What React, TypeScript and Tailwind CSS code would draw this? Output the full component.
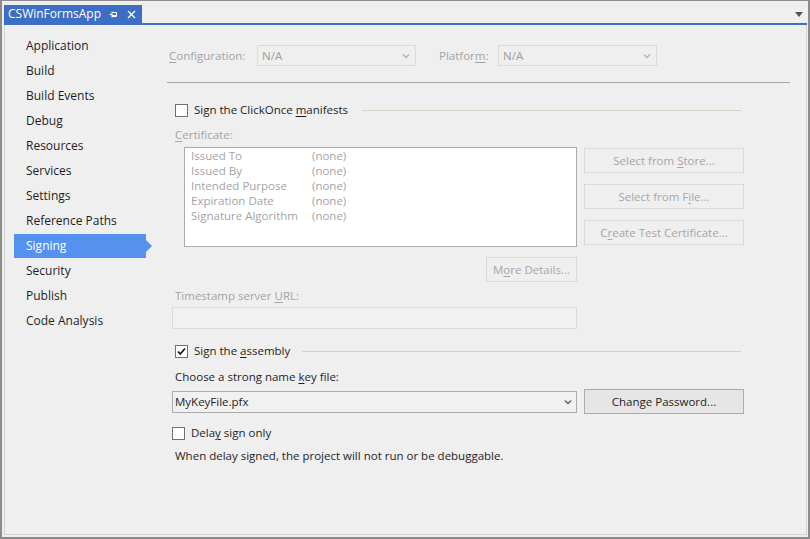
import React from 'react';

const navItems = [
  'Application',
  'Build',
  'Build Events',
  'Debug',
  'Resources',
  'Services',
  'Settings',
  'Reference Paths',
  'Signing',
  'Security',
  'Publish',
  'Code Analysis',
];

const certRows = [
  ['Issued To', '(none)'],
  ['Issued By', '(none)'],
  ['Intended Purpose', '(none)'],
  ['Expiration Date', '(none)'],
  ['Signature Algorithm', '(none)'],
];

function Chevron({ color = '#9a9a9a' }: { color?: string }) {
  return (
    <svg width="8" height="6" viewBox="0 0 8 6" className="shrink-0">
      <path d="M1 1.5 L4 4.5 L7 1.5" fill="none" stroke={color} strokeWidth="1.4" />
    </svg>
  );
}

function Checkbox({ checked }: { checked?: boolean }) {
  return (
    <div className="w-[13px] h-[13px] border border-[#707070] bg-white flex items-center justify-center shrink-0">
      {checked && (
        <svg width="11" height="11" viewBox="0 0 11 11">
          <path d="M2 5.5 L4.3 8 L9 2.5" fill="none" stroke="#1a1a1a" strokeWidth="1.8" />
        </svg>
      )}
    </div>
  );
}

function DisabledButton({ children, className = '' }: { children: React.ReactNode; className?: string }) {
  return (
    <div
      className={`h-[25px] border border-[#d9d9d9] bg-[#efefef] text-[#a6a6a6] flex items-center justify-center ${className}`}
    >
      {children}
    </div>
  );
}

export default function App() {
  return (
    <div className="w-[810px] h-[539px] bg-[#efefef] border-t border-l-2 border-r-2 border-b-2 border-[#8c8c8c] flex flex-col font-['Open_Sans','Noto_Sans',sans-serif] text-[11.5px] text-[#1e1e1e] leading-none overflow-hidden">
      {/* tab strip */}
      <div className="h-[22px] pl-[2px] pr-[5px] flex items-end justify-between shrink-0">
        <div className="h-[18px] w-[138px] bg-[#3c6fc4] text-white flex items-center pl-[4px]">
          <span className="text-[12px] w-[97px] shrink-0">CSWinFormsApp</span>
          <svg width="9" height="9" viewBox="0 0 9 9" className="ml-[4px] shrink-0">
            <path d="M0.5 4.5 H3 M3 1.5 V7.5 M3 2.5 H7.5 V6.5 H3 M3 5.5 H7.5" fill="none" stroke="white" strokeWidth="1" />
          </svg>
          <svg width="9" height="9" viewBox="0 0 9 9" className="ml-[9px] shrink-0">
            <path d="M1 1 L8 8 M8 1 L1 8" fill="none" stroke="white" strokeWidth="1.4" />
          </svg>
        </div>
        <svg width="8" height="5" viewBox="0 0 8 5" className="mb-[6px]">
          <path d="M0 0 H8 L4 5 Z" fill="#555" />
        </svg>
      </div>
      <div className="h-[2px] bg-[#3c6fc4] ml-[2px] mr-[1px] shrink-0" />

      {/* body */}
      <div className="flex-1 ml-[2px] mr-[1px] mb-[2px] border-l border-r border-b border-[#d4d4d4] flex">
        {/* sidebar */}
        <div className="w-[147px] pt-[8px] shrink-0 text-[12px]">
          {navItems.map((item) => {
            const active = item === 'Signing';
            return (
              <div key={item} className="flex items-center ml-[9px] h-[25px]">
                <div
                  className={`w-[132px] h-[24px] flex items-center pl-[12px] ${
                    active ? 'bg-[#5592f0] text-white' : ''
                  }`}
                >
                  {item}
                </div>
                {active && (
                  <svg width="6" height="12" viewBox="0 0 6 12">
                    <path d="M0 0 L6 6 L0 12 Z" fill="#5592f0" />
                  </svg>
                )}
              </div>
            );
          })}
        </div>

        {/* main */}
        <div className="flex-1 pl-[15px] pr-[15px] pt-[20px]">
          <div className="flex items-center h-[21px] text-[#a4a4a4]">
            <span className="w-[90px] shrink-0 pl-[2px]">
              <u className="underline-offset-2">C</u>onfiguration:
            </span>
            <div className="w-[159px] shrink-0 h-[21px] border border-[#d9d9d9] flex items-center justify-between pl-[4px] pr-[5px] text-[#9c9c9c]">
              <span>N/A</span>
              <Chevron color="#b4b4b4" />
            </div>
            <span className="w-[82px] shrink-0 pl-[23px]">
              Platfor<u className="underline-offset-2">m</u>:
            </span>
            <div className="w-[159px] shrink-0 h-[21px] border border-[#d9d9d9] flex items-center justify-between pl-[4px] pr-[5px] text-[#9c9c9c]">
              <span>N/A</span>
              <Chevron color="#b4b4b4" />
            </div>
          </div>

          <div className="mt-[16px] h-px w-[623px] bg-[#a8a8a8]" />

          <div className="mt-[19px] h-[16px] flex items-center w-[566px] ml-[8px]">
            <Checkbox />
            <span className="ml-[6px]">
              Sign the ClickOnce <u className="underline-offset-2">m</u>anifests
            </span>
            <div className="flex-1 ml-[14px] h-px bg-[#d6d3c6]" />
          </div>

          <div className="mt-[9px] h-[16px] flex items-center ml-[8px] text-[#a4a4a4]">
            <span>
              <u className="underline-offset-2">C</u>ertificate:
            </span>
          </div>

          <div className="mt-[4px] ml-[17px] flex gap-[7px]">
            <div className="w-[393px] h-[100px] border border-[#acacac] bg-white pl-[6px] text-[#a4a4a4] leading-[15px]">
              {certRows.map(([label, value]) => (
                <div key={label} className="flex h-[15px] items-center">
                  <span className="w-[121px]">{label}</span>
                  <span>{value}</span>
                </div>
              ))}
            </div>
            <div className="flex flex-col gap-[11px] pt-[1px]">
              <DisabledButton className="w-[160px]">
                <span>
                  Select from <u className="underline-offset-2">S</u>tore...
                </span>
              </DisabledButton>
              <DisabledButton className="w-[160px]">
                <span>
                  Select from F<u className="underline-offset-2">i</u>le...
                </span>
              </DisabledButton>
              <DisabledButton className="w-[160px]">
                <span>
                  C<u className="underline-offset-2">r</u>eate Test Certificate...
                </span>
              </DisabledButton>
            </div>
          </div>

          <div className="mt-[10px] w-[410px] flex justify-end">
            <DisabledButton className="w-[91px]">
              <span>
                M<u className="underline-offset-2">o</u>re Details...
              </span>
            </DisabledButton>
          </div>

          <div className="mt-[6px] h-[16px] flex items-center ml-[8px] text-[#a4a4a4]">
            <span>
              Timestamp server <u className="underline-offset-2">U</u>RL:
            </span>
          </div>

          <div className="mt-[3px] ml-[5px] w-[405px] h-[22px] border border-[#dadada] bg-[#f1f1f1]" />

          <div className="mt-[14px] h-[16px] flex items-center w-[566px] ml-[8px]">
            <Checkbox checked />
            <span className="ml-[6px]">
              Sign the <u className="underline-offset-2">a</u>ssembly
            </span>
            <div className="flex-1 ml-[12px] h-px bg-[#d6d3c6]" />
          </div>

          <div className="mt-[10px] h-[16px] flex items-center ml-[8px]">
            <span>
              Choose a strong name <u className="underline-offset-2">k</u>ey file:
            </span>
          </div>

          <div className="mt-[4px] ml-[5px] flex items-center gap-[7px]">
            <div className="w-[405px] h-[22px] border border-[#acacac] bg-[#f1f1f1] flex items-center justify-between pl-[2px] pr-[4px]">
              <span>MyKeyFile.pfx</span>
              <Chevron color="#606060" />
            </div>
            <div className="w-[160px] h-[25px] border border-[#acacac] bg-[#e6e6e6] flex items-center justify-center">
              <span>
                Chan<u className="underline-offset-2">g</u>e Password...
              </span>
            </div>
          </div>

          <div className="mt-[11px] h-[16px] flex items-center ml-[5px]">
            <Checkbox />
            <span className="ml-[6px]">
              Dela<u className="underline-offset-2">y</u> sign only
            </span>
          </div>

          <div className="mt-[7px] h-[16px] flex items-center ml-[8px]">
            <span>When delay signed, the project will not run or be debuggable.</span>
          </div>
        </div>
      </div>
    </div>
  );
}
